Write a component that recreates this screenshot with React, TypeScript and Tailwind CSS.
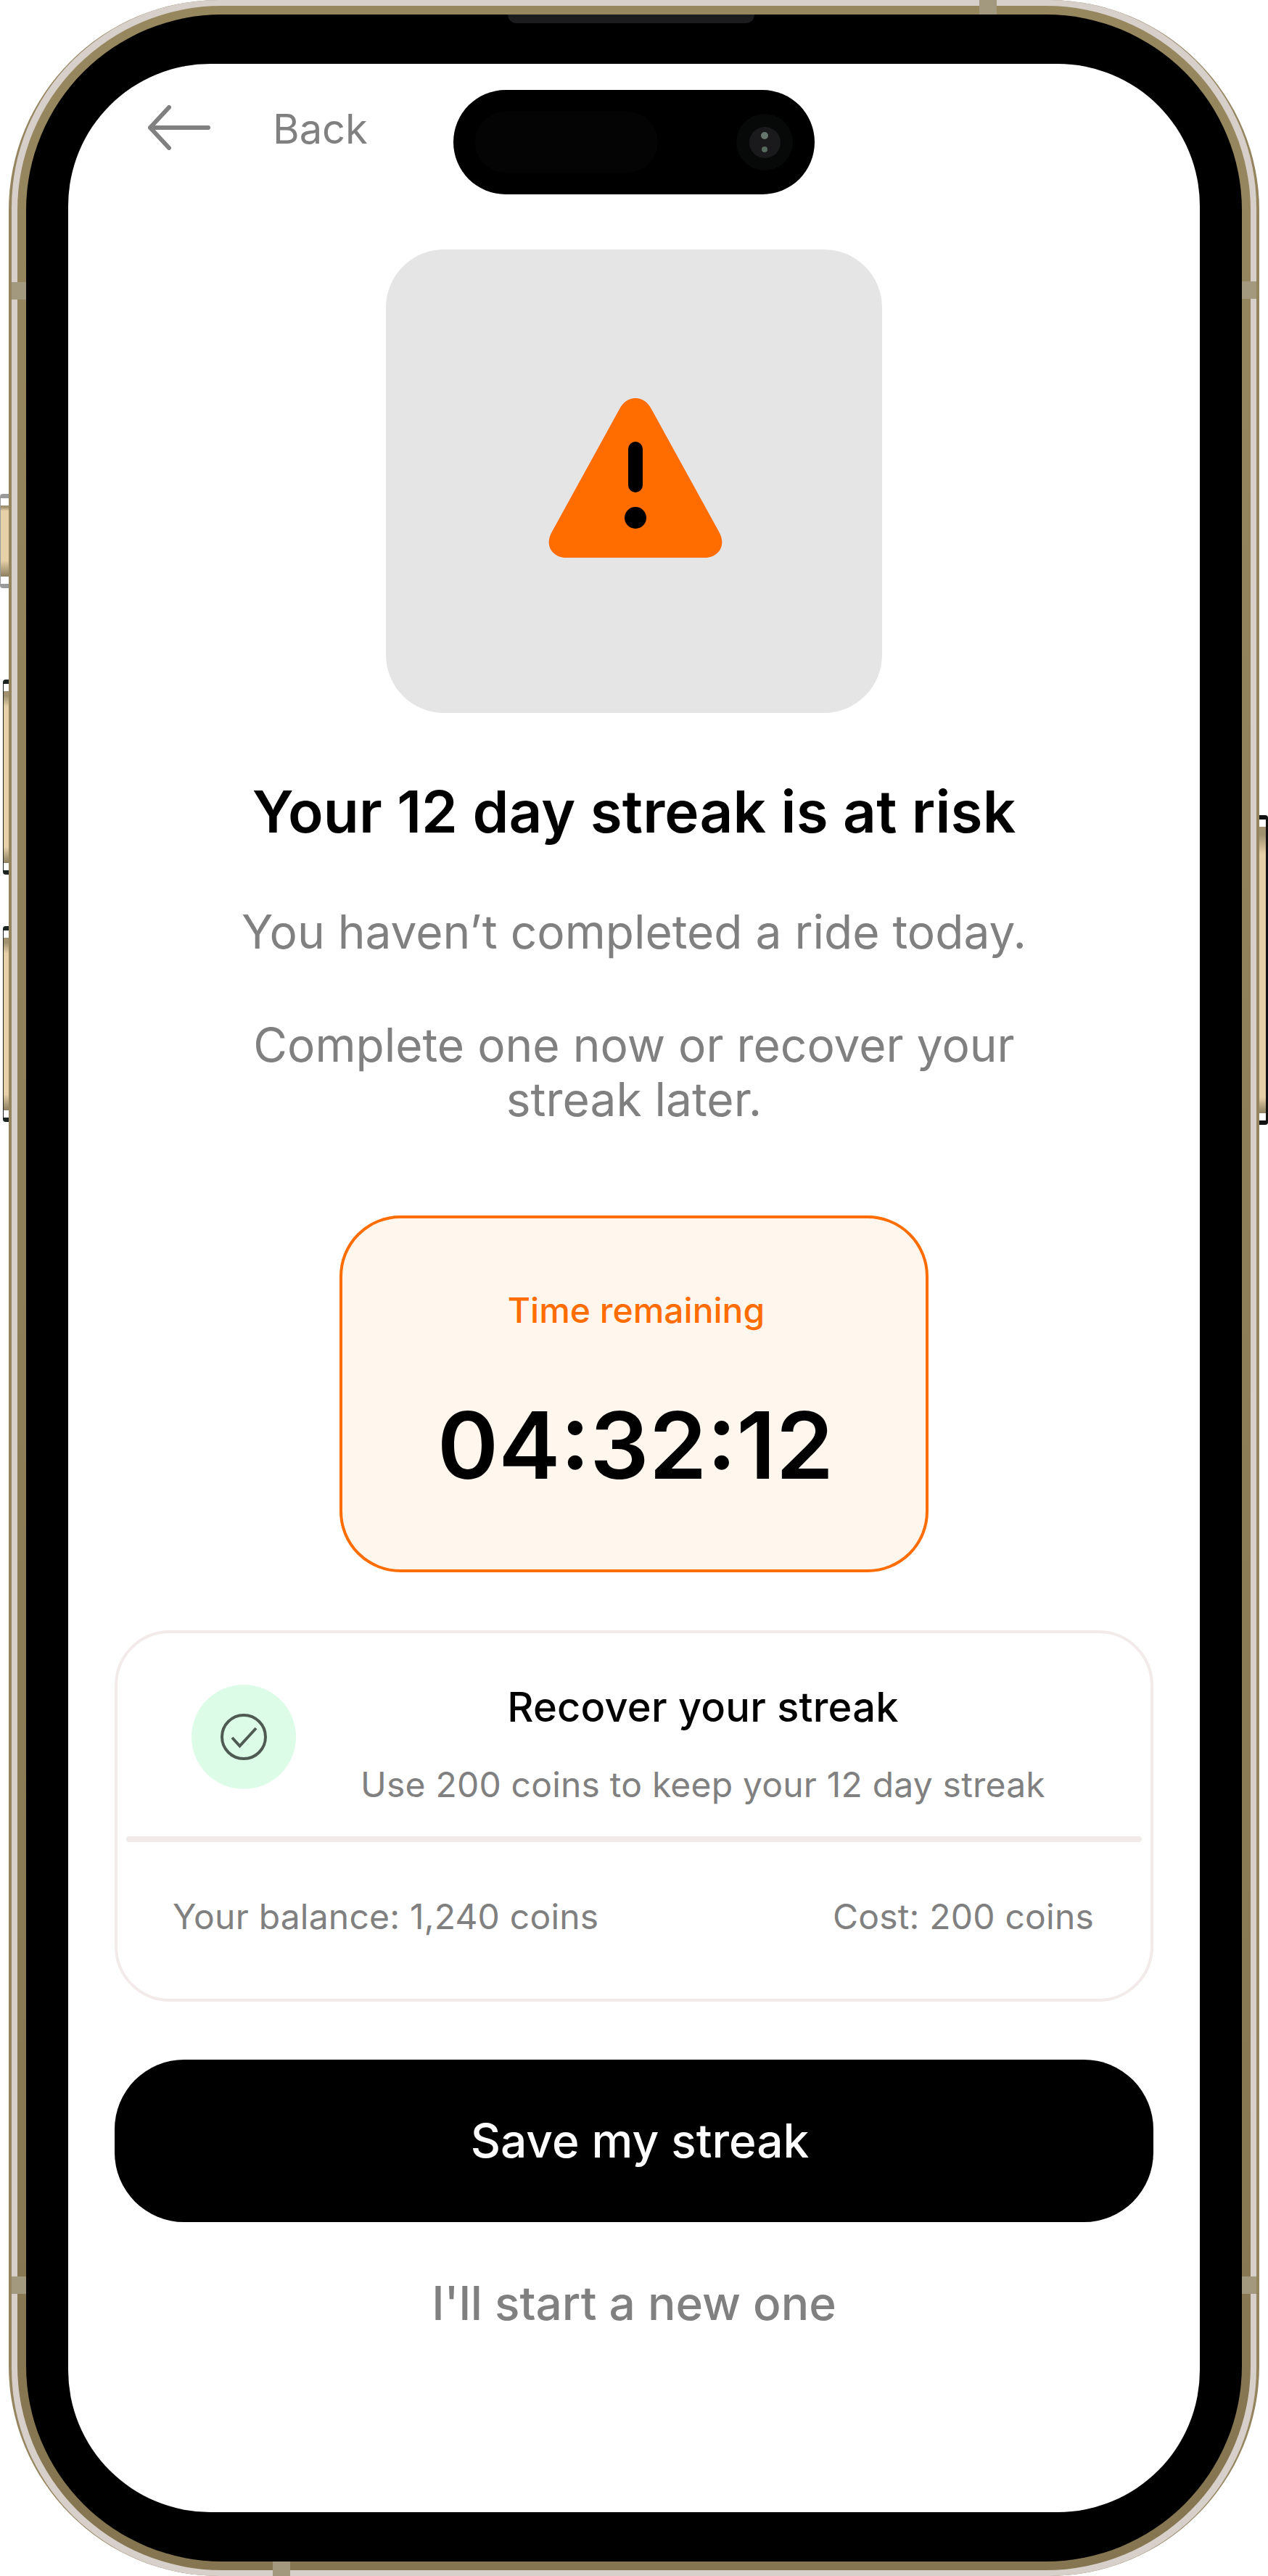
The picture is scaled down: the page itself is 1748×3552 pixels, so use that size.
const SideButton = ({ className, rim }: { className: string; rim: string }) => (
  <div className={`absolute flex flex-col py-[6px] ${rim} ${className}`}>
    <div className="flex h-full flex-col">
      <div className="h-[10px] bg-white" />
      <div className="flex-1 bg-linear-to-b from-[#a0916f] from-[3%] via-[#e6d0a8] via-[10%] to-[#e6d0a8] to-90%" />
      <div className="h-[22px] bg-linear-to-b from-[#e6d0a8] to-[#8d7f5f]" />
      <div className="h-[10px] bg-white" />
    </div>
  </div>
)

const Band = ({ className }: { className: string }) => (
  <div className={`absolute bg-[#a3997f] ${className}`} />
)

const Island = () => (
  <div className="absolute left-[531px] top-[36px] flex h-[144px] w-[498px] items-center justify-between rounded-full bg-black pr-[30px] pl-[30px]">
    <div className="h-[84px] w-[252px] rounded-full bg-[#030403]" />
    <div className="flex size-[78px] items-center justify-center rounded-full bg-[#070908]">
      <div className="flex size-[43px] flex-col items-center justify-center gap-[10px] rounded-full bg-[#1a1a1c]">
        <div className="size-[10px] rounded-full bg-[#66766c]" />
        <div className="size-[8px] rounded-full bg-[#566b5e]" />
      </div>
    </div>
  </div>
)

const WarningIcon = () => (
  <svg width="240" height="220" viewBox="0 0 240 220">
    <path
      d="M98 15C108 -5 132 -5 142 15L235 184C247 205 232 220 216 220L24 220C8 220 -7 205 5 184Z"
      fill="#FF6D00"
    />
    <rect x="110" y="60" width="20" height="70" rx="10" fill="#000" />
    <circle cx="120" cy="165" r="15" fill="#000" />
  </svg>
)

const CheckIcon = () => (
  <svg width="64" height="64" viewBox="0 0 64 64" fill="none" stroke="#4F5A52" strokeWidth="4">
    <circle cx="32" cy="32" r="30" />
    <path d="M16 33L26.500 44.500L49 20" />
  </svg>
)

export default function App() {
  return (
    <div className="relative h-[3552px] w-[1748px] overflow-hidden bg-white px-[12px] font-['Inter',sans-serif]">
      <SideButton rim="rounded-l-[4px] bg-[#9a9a9a]" className="left-0 top-[681px] h-[130px] w-[12px] pl-[1px]" />
      <SideButton rim="rounded-l-[4px] bg-[#1c2422]" className="left-[4px] top-[937px] h-[269px] w-[8px] pl-[1px]" />
      <SideButton rim="rounded-l-[4px] bg-[#1c2422]" className="left-[4px] top-[1277px] h-[270px] w-[8px] pl-[1px]" />
      <SideButton rim="rounded-r-[4px] bg-[#111111]" className="right-0 top-[1124px] h-[427px] w-[12px] pr-[3px]" />

      <div className="h-full rounded-[290px] bg-[#95855f] px-[4px]">
        <div className="h-full rounded-[286px] bg-[#d6cfca] p-[8px]">
          <div className="relative h-full rounded-[282px] bg-linear-to-b from-[#97875f] to-[#857651] p-[12px]">
            <Band className="left-[-8px] top-[381px] h-[24px] w-[20px]" />
            <Band className="right-[-8px] top-[380px] h-[24px] w-[20px]" />
            <Band className="left-[-8px] top-[3131px] h-[24px] w-[20px]" />
            <Band className="right-[-8px] top-[3131px] h-[24px] w-[20px]" />
            <Band className="right-[350px] top-[-8px] h-[20px] w-[24px]" />
            <Band className="left-[352px] bottom-[-8px] h-[20px] w-[24px]" />

            <div className="relative h-full rounded-[270px] bg-black px-[58px] py-[68px]">
              <div className="absolute left-[664px] top-0 h-[12px] w-[340px] rounded-b-[14px] bg-[#1c1c1e]" />

              <div className="relative flex h-full flex-col items-center rounded-[196px] bg-white">
                <Island />

                <div className="flex h-[256px] w-full items-start gap-[86px] pl-[110px] pt-[56px]">
                  <svg width="86" height="62" viewBox="0 0 86 62" fill="none" stroke="#808080" strokeWidth="6" strokeLinecap="round" strokeLinejoin="round" className="mt-[1px]">
                    <path d="M83 31H3M29 3L3 31L29 59" />
                  </svg>
                  <span className="text-[56px] leading-[68px] text-[#808080]">Back</span>
                </div>

                <div className="flex h-[639px] w-[684px] items-center justify-center rounded-[80px] bg-[#e5e5e5] pb-[10px] pl-[4px]">
                  <WarningIcon />
                </div>

                <h1 className="mt-[86px] text-[80px] leading-[100px] font-semibold tracking-[0.14px] text-black">Your 12 day streak is at risk</h1>

                <p className="mt-[78px] text-[64px] leading-[76px] text-[#808080]">You haven’t completed a ride today.</p>
                <p className="mt-[80px] w-[1100px] text-center text-[64px] leading-[75px] text-[#808080]">
                  Complete one now or recover your streak later.
                </p>

                <div className="mt-[123px] flex h-[492px] w-[812px] flex-col items-center rounded-[84px] border-[4px] border-[#ff6d00] bg-[#fff6ee] pt-[97px] pl-[4px]">
                  <span className="pl-[2px] text-[48px] leading-[60px] font-medium text-[#ff6d00]">Time remaining</span>
                  <span className="mt-[78px] text-[128px] leading-[156px] font-semibold text-black">04:32:12</span>
                </div>

                <div className="mt-[80px] h-[512px] w-[1432px] rounded-[76px] border-[4px] border-[#f3eaea] px-[12px] tracking-[0.2px]">
                  <div className="flex h-[280px] items-start">
                    <div className="mt-[71px] ml-[90px] flex size-[144px] shrink-0 items-center justify-center rounded-full bg-[#dcfce7]">
                      <CheckIcon />
                    </div>
                    <div className="ml-[30px] flex-1 pr-[74px] text-center">
                      <div className="mt-[68px] text-[56px] leading-[68px] font-medium text-black">Recover your streak</div>
                      <div className="mt-[44px] text-[48px] leading-[58px] text-[#808080]">Use 200 coins to keep your 12 day streak</div>
                    </div>
                  </div>
                  <div className="h-[8px] rounded-full bg-[#f3eaea]" />
                  <div className="flex items-center justify-between pt-[74px] pr-[66px] pl-[64px] text-[48px] leading-[58px] text-[#808080]">
                    <span>Your balance: 1,240 coins</span>
                    <span>Cost: 200 coins</span>
                  </div>
                </div>

                <button className="mt-[80px] flex h-[224px] w-[1432px] items-center justify-center rounded-[96px] bg-black pl-[16px] text-[64px] font-medium text-white">
                  Save my streak
                </button>

                <div className="mt-[74px] text-[64px] leading-[76px] font-medium text-[#808080]">I'll start a new one</div>
              </div>
            </div>
          </div>
        </div>
      </div>
    </div>
  )
}
